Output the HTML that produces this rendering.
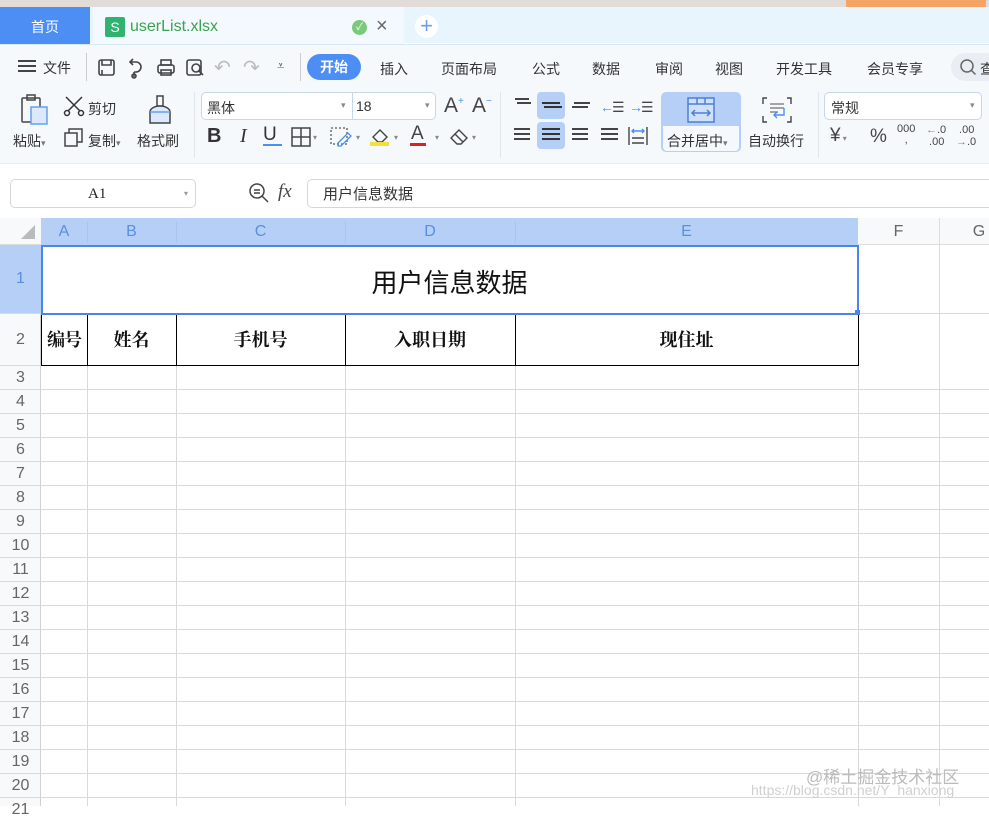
<!DOCTYPE html>
<html><head><meta charset="utf-8">
<style>
*{margin:0;padding:0;box-sizing:border-box}
body{width:989px;height:806px;overflow:hidden;position:relative;background:#fff;font-family:"Liberation Sans","Noto Sans CJK SC",sans-serif;color:#333}
.a{position:absolute}
.t{font-size:14px;color:#333;white-space:nowrap}
.vl{position:absolute;top:245px;bottom:0;width:1px;background:#d9d9d9}
.rl{position:absolute;left:0;width:41px;text-align:center;font-size:16px;color:#666;height:24px;line-height:24px}
.ch{position:absolute;top:218px;height:27px;line-height:27px;text-align:center;font-size:16px;color:#5a8fe0}
.hd{position:absolute;top:315px;height:50px;line-height:50px;text-align:center;font-family:"Liberation Serif","Noto Serif CJK SC",serif;font-weight:bold;font-size:18px;color:#111}
svg{position:absolute}
</style></head><body>
<div class="a" style="left:0;top:0;width:989px;height:7px;background:#e1dcd8"></div>
<div class="a" style="left:846px;top:0;width:140px;height:7px;background:#f6a466"></div>
<div class="a" style="left:0;top:7px;width:989px;height:36px;background:#e8f5fd"></div>
<div class="a" style="left:0;top:7px;width:90px;height:37px;background:#4d8ef5;color:#fff;font-size:14px;text-align:center;line-height:40px">首页</div>
<div class="a" style="left:93px;top:7px;width:311px;height:37px;background:#f3f9fe"></div>
<div class="a" style="left:105px;top:17px;width:20px;height:20px;background:#2fb36f;border-radius:2px;color:#fff;font-size:14px;text-align:center;line-height:20px">S</div>
<div class="a" style="left:130px;top:18px;font-size:16px;color:#3aa34c">userList.xlsx</div>
<div class="a" style="left:352px;top:20px;width:15px;height:15px;border-radius:50%;background:#7bc97b;color:#fff;font-size:10px;text-align:center;line-height:15px">✓</div>
<div class="a" style="left:376px;top:15px;font-size:20px;color:#666">×</div>
<div class="a" style="left:415px;top:15px;width:23px;height:23px;border-radius:50%;background:#fff;color:#6a9ef0;font-size:22px;text-align:center;line-height:22px">+</div>
<div class="a" style="left:0;top:44px;width:989px;height:120px;background:#f6f9fc;border-bottom:1px solid #e8ecf0;border-top:1px solid #d6e8f6"></div>
<div class="a" style="left:18px;top:60px;width:18px;height:2px;background:#444;box-shadow:0 5px 0 #444,0 10px 0 #444"></div>
<div class="a t" style="left:43px;top:58px">文件</div>
<div class="a" style="left:86px;top:53px;width:1px;height:28px;background:#ccc"></div>
<svg style="left:96px;top:57px" width="22" height="22" viewBox="0 0 22 22" fill="none" stroke="#444" stroke-width="1.6"><rect x="3" y="3" width="15" height="15" rx="2"/><path d="M6 3v5h9V3M6 18v-5"/></svg>
<svg style="left:126px;top:57px" width="22" height="22" viewBox="0 0 22 22" fill="none" stroke="#444" stroke-width="1.6"><path d="M4 5h6a5 5 0 0 1 0 10H8M7 8l-3-3 3-3M8 15v5"/><circle cx="8" cy="19" r="2"/></svg>
<svg style="left:155px;top:57px" width="22" height="22" viewBox="0 0 22 22" fill="none" stroke="#444" stroke-width="1.6"><rect x="6" y="3" width="10" height="5"/><rect x="3" y="8" width="16" height="8" rx="2"/><rect x="6" y="13" width="10" height="5"/></svg>
<svg style="left:184px;top:57px" width="22" height="22" viewBox="0 0 22 22" fill="none" stroke="#444" stroke-width="1.6"><rect x="3" y="3" width="14" height="15" rx="2"/><circle cx="12" cy="11" r="4"/><path d="M15 14l4 4"/></svg>
<div class="a" style="left:214px;top:55px;font-size:20px;color:#bbb">↶</div>
<div class="a" style="left:243px;top:55px;font-size:20px;color:#bbb">↷</div>
<div class="a" style="left:277px;top:58px;font-size:13px;color:#555">⩡</div>
<div class="a" style="left:300px;top:53px;width:1px;height:28px;background:#ccc"></div>
<div class="a" style="left:307px;top:54px;width:54px;height:26px;border-radius:13px;background:#4d8ef5;color:#fff;font-size:14px;font-weight:bold;text-align:center;line-height:26px">开始</div>
<div class="a t" style="left:380px;top:59px">插入</div>
<div class="a t" style="left:441px;top:59px">页面布局</div>
<div class="a t" style="left:532px;top:59px">公式</div>
<div class="a t" style="left:592px;top:59px">数据</div>
<div class="a t" style="left:655px;top:59px">审阅</div>
<div class="a t" style="left:715px;top:59px">视图</div>
<div class="a t" style="left:776px;top:59px">开发工具</div>
<div class="a t" style="left:867px;top:59px">会员专享</div>
<div class="a" style="left:951px;top:53px;width:50px;height:28px;border-radius:14px;background:#e9eef4"></div>
<svg style="left:959px;top:58px" width="18" height="18" viewBox="0 0 18 18" fill="none" stroke="#666" stroke-width="1.5"><circle cx="8" cy="8" r="6"/><path d="M12.5 12.5l4 4"/></svg>
<div class="a t" style="left:980px;top:59px">查</div>
<svg style="left:20px;top:94px" width="30" height="32" viewBox="0 0 30 32" fill="none" stroke="#444" stroke-width="1.5"><rect x="2" y="4" width="18" height="24" rx="1"/><rect x="7" y="1" width="8" height="5"/><rect x="11" y="13" width="16" height="17" fill="#dce8fb" stroke="#6a9ef0"/></svg>
<div class="a t" style="left:13px;top:131px">粘贴<span style="font-size:9px;color:#777">▾</span></div>
<svg style="left:63px;top:95px" width="22" height="22" viewBox="0 0 22 22" fill="none" stroke="#333" stroke-width="1.5"><path d="M3 2l14 14M19 2L5 16"/><circle cx="4" cy="18" r="2.5"/><circle cx="18" cy="18" r="2.5"/></svg>
<div class="a t" style="left:88px;top:99px">剪切</div>
<svg style="left:64px;top:128px" width="20" height="20" viewBox="0 0 20 20" fill="none" stroke="#444" stroke-width="1.5"><rect x="1" y="5" width="12" height="13"/><path d="M5 5V1h13v13h-5"/></svg>
<div class="a t" style="left:88px;top:131px">复制<span style="font-size:9px;color:#777">▾</span></div>
<svg style="left:147px;top:94px" width="26" height="32" viewBox="0 0 26 32" fill="none" stroke="#444" stroke-width="1.5"><rect x="10" y="2" width="6" height="10"/><path d="M3 18a10 6 0 0 1 20 0v11H3z" fill="#dce8fb"/><path d="M3 18h20" stroke="#6a9ef0"/></svg>
<div class="a t" style="left:137px;top:131px">格式刷</div>
<div class="a" style="left:194px;top:92px;width:1px;height:66px;background:#e2e6ea"></div>
<div class="a" style="left:201px;top:92px;width:235px;height:28px;border:1px solid #c7d6ea;border-radius:5px;background:#fff"></div>
<div class="a" style="left:352px;top:93px;width:1px;height:26px;background:#c7d6ea"></div>
<div class="a t" style="left:207px;top:98px">黑体</div>
<div class="a" style="left:341px;top:100px;font-size:9px;color:#888">▾</div>
<div class="a t" style="left:356px;top:98px">18</div>
<div class="a" style="left:425px;top:100px;font-size:9px;color:#888">▾</div>
<div class="a" style="left:444px;top:94px;font-size:21px;color:#444;font-weight:300">A<sup style="font-size:10px;color:#4d8ef5">+</sup></div>
<div class="a" style="left:472px;top:94px;font-size:21px;color:#444">A<sup style="font-size:10px;color:#4d8ef5">−</sup></div>
<div class="a" style="left:207px;top:125px;font-size:20px;font-weight:bold;color:#333">B</div>
<div class="a" style="left:240px;top:125px;font-size:20px;font-style:italic;font-family:'Liberation Serif',serif;color:#333">I</div>
<div class="a" style="left:263px;top:124px;font-size:19px;color:#333">U</div>
<div class="a" style="left:263px;top:144px;width:19px;height:2px;background:#4d8ef5"></div>
<svg style="left:291px;top:127px" width="20" height="20" viewBox="0 0 20 20" fill="none" stroke="#444" stroke-width="1.5"><rect x="1" y="1" width="18" height="18"/><path d="M10 1v18M1 10h18"/></svg>
<div class="a" style="left:313px;top:133px;font-size:8px;color:#888">▾</div>
<svg style="left:330px;top:127px" width="22" height="22" viewBox="0 0 22 22" fill="none" stroke="#555" stroke-width="1.3"><rect x="1" y="1" width="16" height="16" stroke-dasharray="2 2"/><path d="M8 16l10-10 3 3-10 10H8z" stroke="#4d8ef5"/></svg>
<div class="a" style="left:356px;top:133px;font-size:8px;color:#888">▾</div>
<svg style="left:369px;top:126px" width="22" height="22" viewBox="0 0 22 22" fill="none" stroke="#444" stroke-width="1.4"><path d="M4 11l7-7 7 7-5 5H9z"/><rect x="1" y="16" width="19" height="4" fill="#f0e040" stroke="none"/></svg>
<div class="a" style="left:394px;top:133px;font-size:8px;color:#888">▾</div>
<div class="a" style="left:411px;top:123px;font-size:19px;color:#444">A</div>
<div class="a" style="left:410px;top:143px;width:16px;height:3px;background:#e02020"></div>
<div class="a" style="left:435px;top:133px;font-size:8px;color:#888">▾</div>
<svg style="left:449px;top:127px" width="22" height="20" viewBox="0 0 22 20" fill="none" stroke="#444" stroke-width="1.4"><path d="M2 11l8-8 8 8-6 6H8z"/><path d="M6 7l8 8"/></svg>
<div class="a" style="left:472px;top:133px;font-size:8px;color:#888">▾</div>
<div class="a" style="left:500px;top:92px;width:1px;height:66px;background:#e2e6ea"></div>
<div class="a" style="left:537px;top:92px;width:28px;height:27px;border-radius:4px;background:#b5cff6"></div>
<div class="a" style="left:537px;top:122px;width:28px;height:27px;border-radius:4px;background:#b5cff6"></div>
<div class="a" style="left:515px;top:98px;width:14px;height:1.5px;background:#444;box-shadow:2px 4px 0 #444"></div>
<div class="a" style="left:542px;top:102px;width:18px;height:1.5px;background:#333;box-shadow:2px 4px 0 #333"></div>
<div class="a" style="left:572px;top:106px;width:16px;height:1.5px;background:#444;box-shadow:2px -4px 0 #444"></div>
<div class="a" style="left:600px;top:99px;font-size:14px;color:#444;letter-spacing:-2px"><span style="color:#4d8ef5">←</span>☰</div>
<div class="a" style="left:629px;top:99px;font-size:14px;color:#444;letter-spacing:-2px"><span style="color:#4d8ef5">→</span>☰</div>
<div class="a" style="left:514px;top:128px;width:16px;height:1.5px;background:#444;box-shadow:0 5px 0 #444,0 10px 0 #444"></div>
<div class="a" style="left:542px;top:128px;width:18px;height:1.5px;background:#333;box-shadow:0 5px 0 #333,0 10px 0 #333"></div>
<div class="a" style="left:572px;top:128px;width:16px;height:1.5px;background:#444;box-shadow:0 5px 0 #444,0 10px 0 #444"></div>
<div class="a" style="left:601px;top:128px;width:17px;height:1.5px;background:#444;box-shadow:0 5px 0 #444,0 10px 0 #444"></div>
<svg style="left:627px;top:126px" width="22" height="20" viewBox="0 0 22 20" fill="none" stroke="#444" stroke-width="1.4"><path d="M2 1v18M20 1v18M5 12h12M5 17h12"/><path d="M5 5h12M7 3l-2 2 2 2M15 3l2 2-2 2" stroke="#4d8ef5"/></svg>
<div class="a" style="left:661px;top:92px;width:80px;height:60px;border-radius:5px;background:#b5cff6"></div>
<div class="a" style="left:663px;top:126px;width:76px;height:25px;border-radius:0 0 4px 4px;background:#f5f9fe"></div>
<svg style="left:687px;top:97px" width="28" height="26" viewBox="0 0 28 26" fill="none" stroke="#4d7fd6" stroke-width="1.5"><rect x="1" y="1" width="26" height="24" fill="#cfe0fb"/><path d="M1 7h26M10 1v6M18 1v6M5 16h18M8 13l-3 3 3 3M20 13l3 3-3 3"/></svg>
<div class="a t" style="left:667px;top:131px">合并居中<span style="font-size:9px;color:#777">▾</span></div>
<svg style="left:762px;top:97px" width="30" height="26" viewBox="0 0 30 26" fill="none" stroke="#444" stroke-width="1.4"><path d="M5 1H1v6M25 1h4v6M5 25H1v-6M25 25h4v-6"/><path d="M8 7h14M8 11h14M8 15h8" stroke="#888"/><path d="M22 11v7H12M15 15l-3 3 3 3" stroke="#4d8ef5"/></svg>
<div class="a t" style="left:748px;top:131px">自动换行</div>
<div class="a" style="left:818px;top:92px;width:1px;height:66px;background:#e2e6ea"></div>
<div class="a" style="left:824px;top:92px;width:158px;height:28px;border:1px solid #c7d6ea;border-radius:5px;background:#fff"></div>
<div class="a t" style="left:831px;top:98px">常规</div>
<div class="a" style="left:970px;top:100px;font-size:9px;color:#888">▾</div>
<div class="a" style="left:830px;top:125px;font-size:19px;color:#444">¥<span style="font-size:8px;color:#888"> ▾</span></div>
<div class="a" style="left:870px;top:126px;font-size:19px;color:#444">%</div>
<div class="a" style="left:897px;top:124px;font-size:11px;color:#444;line-height:11px;text-align:center">000<br>,</div>
<div class="a" style="left:926px;top:124px;font-size:11px;color:#444;line-height:12px"><span style="color:#4d8ef5">←</span>.0<br>&nbsp;.00</div>
<div class="a" style="left:956px;top:124px;font-size:11px;color:#444;line-height:12px">&nbsp;.00<br><span style="color:#4d8ef5">→</span>.0</div>
<div class="a" style="left:10px;top:179px;width:186px;height:29px;border:1px solid #d3d7dc;border-radius:5px;background:#fff"></div>
<div class="a" style="left:88px;top:186px;font-family:'Liberation Serif',serif;font-size:15px;color:#222">A1</div>
<div class="a" style="left:184px;top:189px;font-size:8px;color:#999">▾</div>
<svg style="left:248px;top:182px" width="22" height="22" viewBox="0 0 22 22" fill="none" stroke="#444" stroke-width="1.5"><circle cx="9" cy="9" r="7"/><path d="M14 14l6 6M6 8h6M6 11h6"/></svg>
<div class="a" style="left:278px;top:181px;font-family:'Liberation Serif',serif;font-style:italic;font-size:19px;color:#444">fx</div>
<div class="a" style="left:307px;top:179px;width:700px;height:29px;border:1px solid #d3d7dc;border-radius:5px;background:#fff"></div>
<div class="a" style="left:323px;top:183px;font-size:15px;color:#333">用户信息数据</div>
<div class="a" style="left:0;top:218px;width:989px;height:27px;background:#f7f9fb;border-bottom:1px solid #ddd"></div>
<div class="a" style="left:41px;top:218px;width:817px;height:27px;background:#b5cff7"></div>
<svg style="left:20px;top:224px" width="16" height="16"><path d="M15 1v14H1z" fill="#bbb"/></svg>
<div class="ch" style="left:41px;width:46px">A</div>
<div class="ch" style="left:87px;width:89px">B</div>
<div class="ch" style="left:176px;width:169px">C</div>
<div class="ch" style="left:345px;width:170px">D</div>
<div class="ch" style="left:515px;width:343px">E</div>
<div class="ch" style="left:858px;width:81px;color:#666">F</div>
<div class="ch" style="left:939px;width:80px;color:#666">G</div>
<div class="a" style="left:87px;top:221px;width:1px;height:22px;background:#a9c4ee"></div>
<div class="a" style="left:176px;top:221px;width:1px;height:22px;background:#a9c4ee"></div>
<div class="a" style="left:345px;top:221px;width:1px;height:22px;background:#a9c4ee"></div>
<div class="a" style="left:515px;top:221px;width:1px;height:22px;background:#a9c4ee"></div>
<div class="a" style="left:939px;top:218px;width:1px;height:27px;background:#ddd"></div>
<div class="a" style="left:0;top:245px;width:41px;height:561px;background:#f7f9fb;border-right:1px solid #d0d0d0"></div>
<div class="a" style="left:0;top:245px;width:41px;height:69px;background:#b5cff7"></div>
<div class="a" style="left:0;top:366px;width:989px;height:440px;background:repeating-linear-gradient(to bottom,transparent 0 23px,#d9d9d9 23px 24px)"></div>
<div class="a" style="left:858px;top:313px;width:131px;height:1px;background:#d9d9d9"></div>
<div class="a" style="left:0;top:313px;width:41px;height:1px;background:#d9d9d9"></div>
<div class="a" style="left:0;top:365px;width:41px;height:1px;background:#d9d9d9"></div>
<div class="vl" style="left:87px"></div>
<div class="vl" style="left:176px"></div>
<div class="vl" style="left:345px"></div>
<div class="vl" style="left:515px"></div>
<div class="vl" style="left:858px"></div>
<div class="vl" style="left:939px"></div>
<div class="a" style="left:41px;top:245px;width:818px;height:70px;background:#fff;border:2px solid #4a86e8"></div>
<div class="a" style="left:41px;top:263px;width:817px;text-align:center;font-size:26px;color:#111">用户信息数据</div>
<div class="a" style="left:855px;top:310px;width:5px;height:5px;background:#4a86e8"></div>
<div class="a" style="left:41px;top:315px;width:818px;height:51px;border:1px solid #000;border-top:none;background:#fff"></div>
<div class="a" style="left:87px;top:315px;width:1px;height:50px;background:#000"></div>
<div class="a" style="left:176px;top:315px;width:1px;height:50px;background:#000"></div>
<div class="a" style="left:345px;top:315px;width:1px;height:50px;background:#000"></div>
<div class="a" style="left:515px;top:315px;width:1px;height:50px;background:#000"></div>
<div class="hd" style="left:41px;width:46px;letter-spacing:-1px">编号</div>
<div class="hd" style="left:87px;width:89px">姓名</div>
<div class="hd" style="left:176px;width:169px">手机号</div>
<div class="hd" style="left:345px;width:170px">入职日期</div>
<div class="hd" style="left:515px;width:343px">现住址</div>
<div class="rl" style="top:267px;color:#5a8fe0">1</div>
<div class="rl" style="top:328px">2</div>
<div class="rl" style="top:366px">3</div>
<div class="rl" style="top:390px">4</div>
<div class="rl" style="top:414px">5</div>
<div class="rl" style="top:438px">6</div>
<div class="rl" style="top:462px">7</div>
<div class="rl" style="top:486px">8</div>
<div class="rl" style="top:510px">9</div>
<div class="rl" style="top:534px">10</div>
<div class="rl" style="top:558px">11</div>
<div class="rl" style="top:582px">12</div>
<div class="rl" style="top:606px">13</div>
<div class="rl" style="top:630px">14</div>
<div class="rl" style="top:654px">15</div>
<div class="rl" style="top:678px">16</div>
<div class="rl" style="top:702px">17</div>
<div class="rl" style="top:726px">18</div>
<div class="rl" style="top:750px">19</div>
<div class="rl" style="top:774px">20</div>
<div class="rl" style="top:798px">21</div>
<div class="a" style="left:806px;top:763px;font-size:17px;color:#bbb">@稀土掘金技术社区</div>
<div class="a" style="left:751px;top:782px;font-size:14px;color:#d0d0d0">https://blog.csdn.net/Y_hanxiong</div>
</body></html>
